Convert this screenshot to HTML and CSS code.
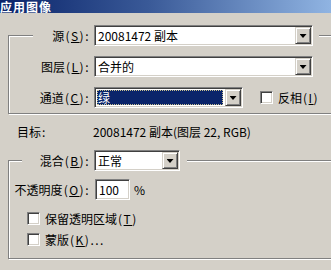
FILE: index.html
```html
<!DOCTYPE html>
<html lang="zh-CN">
<head>
<meta charset="utf-8">
<title>应用图像</title>
<link rel="stylesheet" href="styles.css">
</head>
<body>
<div class="titlebar"><span class="title">应用图像</span></div>

<fieldset class="group g1">
  <legend class="legend l1">
    <div class="row">
      <label class="lbl">源<span class="mn">(<u>S</u>):</span></label>
      <div class="combo w-src"><span class="val">20081472 副本</span><span class="drop"></span></div>
    </div>
  </legend>
  <div class="row r2">
    <label class="lbl">图层<span class="mn">(<u>L</u>):</span></label>
    <div class="combo w-src"><span class="val">合并的</span><span class="drop"></span></div>
  </div>
  <div class="row r3">
    <label class="lbl">通道<span class="mn">(<u>C</u>):</span></label>
    <div class="combo w-ch"><span class="val sel">绿</span><span class="drop"></span></div>
    <span class="check ch-inv"></span>
    <span class="cbtext">反相<span class="mn">(<u>I</u>)</span></span>
  </div>
</fieldset>

<div class="target">
  <span class="tlbl">目标<span class="mn">:</span></span>
  <span class="tval">20081472 副本(图层 22, RGB)</span>
</div>

<fieldset class="group g2">
  <legend class="legend l2">
    <div class="row">
      <label class="lbl">混合<span class="mn">(<u>B</u>):</span></label>
      <div class="combo w-blend"><span class="val">正常</span><span class="drop"></span></div>
    </div>
  </legend>
  <div class="row opacity">
    <label class="lbl">不透明度<span class="mn">(<u>O</u>):</span></label>
    <div class="textbox">100</div>
    <span class="pct">%</span>
  </div>
  <div class="cbrow first">
    <span class="check"></span>
    <span class="cbtext">保留透明区域<span class="mn">(<u>T</u>)</span></span>
  </div>
  <div class="cbrow second">
    <span class="check"></span>
    <span class="cbtext">蒙版<span class="mn">(<u>K</u>)...</span></span>
  </div>
</fieldset>
</body>
</html>
```

FILE: styles.css
```css
html, body {
  margin: 0;
  padding: 0;
}
body {
  width: 331px;
  height: 270px;
  overflow: hidden;
  background: #d4d0c8;
  color: #000;
  font-family: "Noto Sans CJK SC", "Noto Sans", sans-serif;
  font-size: 12px;
  line-height: 14px;
}
u {
  text-decoration: underline;
  text-underline-offset: 1px;
}
.mn {
  letter-spacing: 1.5px;
  padding-left: 1px;
}

/* title bar */
.titlebar {
  height: 13px;
  background: linear-gradient(to right, #0a246a 0%, #3a5a98 45%, #90b4e2 100%);
}
.title {
  display: block;
  color: #fff;
  font-weight: bold;
  font-size: 12px;
  line-height: 13px;
  letter-spacing: 1px;
}

/* group boxes */
.group {
  border: 1px solid #808080;
  box-shadow: inset 1px 1px 0 #fff, 1px 1px 0 #fff;
  padding: 0;
  margin: 0 -20px 0 8px;
  min-width: 0;
}
.g1 {
  margin-top: 12px;
  padding-bottom: 5px;
}
.g2 {
  margin-top: 11px;
  padding-bottom: 12px;
}
.legend {
  padding: 0;
  background: #d4d0c8;
}
.l1 {
  margin-left: 24px;
  margin-bottom: -2px;
  width: 286px;
}
.l2 {
  margin-left: 13px;
  margin-bottom: -4px;
  width: 165px;
}

.row {
  display: flex;
  align-items: center;
  height: 21px;
}
.r2 {
  margin-top: 12px;
}
.r3 {
  margin-top: 10px;
}
.lbl {
  box-sizing: border-box;
  width: 85px;
  padding-right: 4px;
  text-align: right;
  white-space: nowrap;
}
.l1 .lbl { width: 61px; }
.l2 .lbl { width: 72px; }

/* combo boxes */
.combo {
  box-sizing: border-box;
  height: 21px;
  display: flex;
  align-items: stretch;
  background: #fff;
  border: 1px solid;
  border-color: #808080 #fff #fff #808080;
  box-shadow: inset 1px 1px 0 #404040, inset -1px -1px 0 #d4d0c8;
  padding: 1px;
}
.w-src { width: 219px; }
.w-ch { width: 149px; }
.w-blend { width: 86px; }
.val {
  flex: 1;
  padding-left: 2px;
  line-height: 17px;
  white-space: nowrap;
  overflow: hidden;
}
.val.sel {
  margin: 1px 2px 1px 1px;
  padding-left: 1px;
  line-height: 15px;
  background: #0a246a;
  color: #fff;
  outline: 1px dotted #c8c090;
  outline-offset: -1px;
}
.drop {
  box-sizing: border-box;
  width: 16px;
  background: #d4d0c8;
  border: 1px solid;
  border-color: #d4d0c8 #404040 #404040 #d4d0c8;
  box-shadow: inset 1px 1px 0 #fff, inset -1px -1px 0 #808080;
  display: flex;
  align-items: center;
  justify-content: center;
}
.drop::after {
  content: "";
  width: 7px;
  height: 4px;
  margin-top: 1px;
  background: #000;
  clip-path: polygon(0 0, 100% 0, 50% 100%);
}

/* checkboxes */
.check {
  box-sizing: border-box;
  width: 13px;
  height: 13px;
  flex: none;
  background: #fff;
  border: 1px solid;
  border-color: #808080 #fff #fff #808080;
  box-shadow: inset 1px 1px 0 #404040, inset -1px -1px 0 #d4d0c8;
}
.ch-inv {
  margin-left: 17px;
}
.cbtext {
  margin-left: 5px;
  white-space: nowrap;
}

/* target line */
.target {
  display: flex;
  margin-top: 11px;
  height: 14px;
  line-height: 14px;
}
.tlbl {
  width: 76px;
  margin-left: 17px;
}

/* opacity */
.opacity {
  margin-top: 12px;
}
.textbox {
  box-sizing: border-box;
  width: 35px;
  height: 21px;
  margin-left: 1px;
  background: #fff;
  border: 1px solid;
  border-color: #808080 #fff #fff #808080;
  box-shadow: inset 1px 1px 0 #404040, inset -1px -1px 0 #d4d0c8;
  padding-left: 3px;
  line-height: 19px;
}
.pct {
  margin-left: 4px;
}

.cbrow {
  display: flex;
  align-items: center;
  height: 13px;
  margin-left: 18px;
}
.cbrow.first { margin-top: 12px; }
.cbrow.second { margin-top: 8px; }
```
